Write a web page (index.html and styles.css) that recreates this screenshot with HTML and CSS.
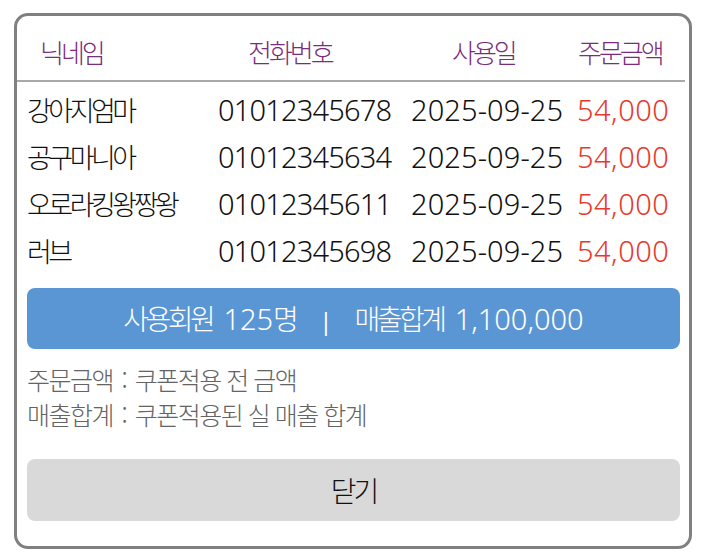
FILE: index.html
```html
<!DOCTYPE html>
<html lang="ko">
<head>
<meta charset="utf-8">
<title>사용회원 내역</title>
<link rel="stylesheet" href="styles.css">
</head>
<body>
<div class="modal">
  <div class="thead cols">
    <div class="th th1">닉네임</div>
    <div class="th th2">전화번호</div>
    <div class="th th3">사용일</div>
    <div class="th th4">주문금액</div>
  </div>
  <div class="tbody">
    <div class="row cols">
      <div class="nick">강아지엄마</div>
      <div class="phone">01012345678</div>
      <div class="date">2025-09-25</div>
      <div class="amt">54,000</div>
    </div>
    <div class="row cols">
      <div class="nick">공구마니아</div>
      <div class="phone">01012345634</div>
      <div class="date">2025-09-25</div>
      <div class="amt">54,000</div>
    </div>
    <div class="row cols">
      <div class="nick">오로라킹왕짱왕</div>
      <div class="phone">01012345611</div>
      <div class="date">2025-09-25</div>
      <div class="amt">54,000</div>
    </div>
    <div class="row cols">
      <div class="nick">러브</div>
      <div class="phone">01012345698</div>
      <div class="date">2025-09-25</div>
      <div class="amt">54,000</div>
    </div>
  </div>
  <div class="summary"><span class="ko">사용회원</span><span class="gap"></span><span class="num">125</span><span class="ko">명</span><span class="sep">|</span><span class="ko">매출합계</span><span class="gap"></span><span class="num">1,100,000</span></div>
  <div class="notes">
    <p>주문금액 <span class="colon">:</span> 쿠폰적용 전 금액</p>
    <p>매출합계 <span class="colon">:</span> 쿠폰적용된 실 매출 합계</p>
  </div>
  <button class="close" type="button">닫기</button>
</div>
</body>
</html>
```

FILE: styles.css
```css
* { box-sizing: border-box; }

html, body {
  margin: 0;
  padding: 0;
  background: #ffffff;
}

body {
  font-family: "Noto Sans", "Noto Sans CJK KR", sans-serif;
  color: #111111;
}

.modal {
  margin: 13px 0 0 14px;
  width: 678px;
  height: 536px;
  border: 3px solid #808080;
  border-radius: 14px;
  display: flex;
  flex-direction: column;
}

.cols {
  display: grid;
  grid-template-columns: 191px 193px 166px 1fr;
  align-items: center;
}

.thead {
  height: 66px;
  padding: 6px 0 0 10px;
  margin-right: 4px;
  border-bottom: 2px solid #a9a9a9;
}

.th {
  font-family: "Noto Sans CJK KR", sans-serif;
  font-size: 26px;
  font-weight: 300;
  letter-spacing: -3px;
  color: #7b2d7b;
  white-space: nowrap;
}
.th1 { padding-left: 13px; }
.th2 { padding-left: 30px; }
.th3 { padding-left: 41px; }
.th4 { padding-left: 1px; }

.tbody {
  margin-top: 4px;
  padding-left: 10px;
}

.row {
  height: 47px;
  white-space: nowrap;
}

.nick {
  font-family: "Noto Sans CJK KR", sans-serif;
  font-size: 27px;
  font-weight: 300;
  letter-spacing: -3.5px;
}

.phone {
  font-size: 29px;
  font-weight: 300;
  letter-spacing: -0.8px;
}

.date {
  font-size: 29px;
  font-weight: 300;
  letter-spacing: 0.1px;
}

.amt {
  font-size: 29px;
  font-weight: 300;
  letter-spacing: 0.5px;
  color: #e5392d;
}

.summary {
  margin: 14px 9px 0 10px;
  height: 61px;
  line-height: 61px;
  border-radius: 8px;
  background: #5b96d4;
  color: #ffffff;
  text-align: center;
  white-space: nowrap;
  font-size: 29px;
  font-weight: 300;
}
.summary .ko {
  font-family: "Noto Sans CJK KR", sans-serif;
  font-weight: 300;
  font-size: 28px;
  letter-spacing: -3.5px;
}
.summary .gap {
  display: inline-block;
  width: 11px;
}
.summary .num {
  letter-spacing: 0;
}
.summary .sep {
  display: inline-block;
  font-size: 24px;
  font-weight: 400;
  margin: 0 22px 0 24px;
}

.notes {
  margin: 13px 9px 0 10px;
  color: #646464;
  font-family: "Noto Sans CJK KR", sans-serif;
  font-size: 25px;
  font-weight: 300;
  letter-spacing: -1.5px;
  line-height: 35px;
}
.notes p { margin: 0; }
.notes .colon { padding: 0 3px; }

.close {
  margin: 27px 9px 0 10px;
  height: 62px;
  border: none;
  border-radius: 8px;
  background: #d9d9d9;
  color: #111111;
  font-family: "Noto Sans CJK KR", sans-serif;
  font-size: 28px;
  font-weight: 300;
  letter-spacing: -3px;
  padding: 0;
}
```
